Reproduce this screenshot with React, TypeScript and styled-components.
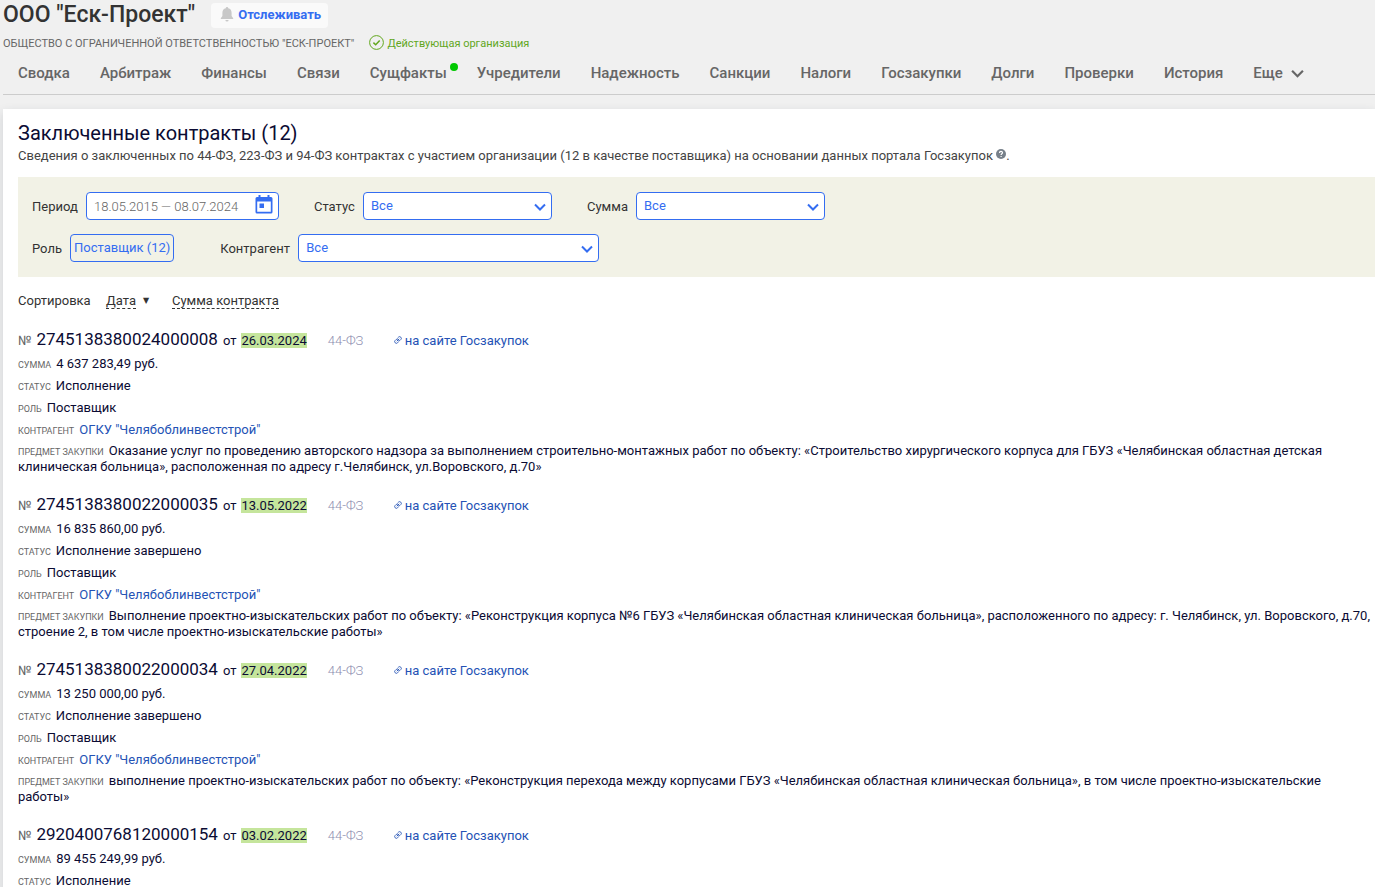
import React from "react";
import styled, { createGlobalStyle } from "styled-components";

const GlobalStyle = createGlobalStyle`
  *, *::before, *::after { box-sizing: border-box; }
  body {
    margin: 0;
    background: #f0f0f0;
    color: #333;
    font-family: Roboto, "Open Sans", sans-serif;
    font-size: 13px;
    line-height: 16px;
  }
  button, input, select { font: inherit; }
  h1, h2, p, dl, dt, dd { margin: 0; }
  a { text-decoration: none; }
`;

const Page = styled.div`
  min-height: 100vh;
  padding-left: 3px;
`;

const TitleRow = styled.header`
  display: flex;
  align-items: center;
  gap: 16px;
  height: 30px;
`;

const Title = styled.h1`
  font-size: 23px;
  line-height: 28px;
  font-weight: 500;
  white-space: nowrap;
`;

const TrackButton = styled.button`
  display: flex;
  align-items: center;
  gap: 4px;
  height: 25px;
  padding: 0 7px 1px 9px;
  border: 0;
  border-radius: 4px;
  background: #fafafa;
  color: #346df1;
  font-weight: 700;
  white-space: nowrap;
`;

const LegalRow = styled.div`
  display: flex;
  align-items: center;
  gap: 15px;
  height: 27px;
  font-size: 11px;
  color: #666;
  white-space: nowrap;
`;

const ActiveState = styled.span`
  display: flex;
  align-items: center;
  gap: 3px;
  color: #62a71d;
  svg { margin-bottom: 2px; }
`;

const Nav = styled.nav`
  display: flex;
  gap: 30px;
  height: 38px;
  padding: 6px 0 0 15px;
  border-bottom: 1px solid #ccc;
  overflow: hidden;
`;

const NavLink = styled.a`
  position: relative;
  display: flex;
  align-items: center;
  gap: 8px;
  height: 20px;
  color: #666;
  font-size: 15px;
  font-weight: 500;
  white-space: nowrap;
`;

const NewDot = styled.span`
  position: absolute;
  top: 0;
  right: -11px;
  width: 8px;
  height: 8px;
  border-radius: 50%;
  background: #00c800;
`;

const Panel = styled.main`
  margin-top: 14px;
  padding: 12px 0 0 15px;
  background: #fff;
  box-shadow: 0 4px 10px rgba(40, 50, 70, 0.16);
`;

const PanelTitle = styled.h2`
  font-size: 20px;
  line-height: 24px;
  font-weight: 400;
  color: #0b0b33;
`;

const Lead = styled.p`
  margin-top: 3px;
  color: #444;
`;

const HelpButton = styled.button`
  display: inline-block;
  width: 10px;
  height: 10px;
  padding: 0;
  border: 0;
  background: none;
  vertical-align: 1px;
  svg { display: block; }
`;

const Filters = styled.form`
  display: flex;
  flex-direction: column;
  gap: 14px;
  margin-top: 13px;
  padding: 15px 14px;
  background: #f2f2e6;
`;

const FilterRow = styled.div`
  display: flex;
  gap: 35px;
`;

const Field = styled.div<{ $trail?: number }>`
  display: flex;
  align-items: center;
  gap: 8px;
  margin-right: ${(p) => p.$trail ?? 0}px;
`;

const FieldLabel = styled.label<{ $width: number }>`
  min-width: ${(p) => p.$width}px;
  padding-top: 2px;
  white-space: nowrap;
`;

const DateBox = styled.div`
  display: flex;
  align-items: center;
  width: 193px;
  height: 28px;
  padding: 0 5px 0 7px;
  border: 1px solid #346df1;
  border-radius: 4px;
  background: #fff;
`;

const DateInput = styled.input`
  flex: 1;
  min-width: 0;
  padding: 2px 0 0;
  border: 0;
  outline: 0;
  background: none;
  color: #666;
  font-weight: 300;
`;

const IconButton = styled.button`
  padding: 0 0 2px;
  border: 0;
  background: none;
  color: #346df1;
  svg { display: block; }
`;

const SelectBox = styled.div<{ $width: number }>`
  display: grid;
  align-items: center;
  width: ${(p) => p.$width}px;
  height: 28px;
  color: #346df1;
  > * { grid-area: 1 / 1; }
  svg {
    z-index: 1;
    justify-self: end;
    margin: 2px 6px 0 0;
    pointer-events: none;
  }
`;

const Select = styled.select`
  width: 100%;
  height: 28px;
  padding: 0 24px 0 7px;
  border: 1px solid #346df1;
  border-radius: 4px;
  background: #fff;
  color: #346df1;
  appearance: none;
`;

const RoleButton = styled.button`
  min-width: 104px;
  height: 28px;
  padding: 0 3px;
  border: 1px solid #346df1;
  border-radius: 4px;
  background: none;
  color: #346df1;
`;

const SortRow = styled.div`
  display: flex;
  align-items: center;
  margin-top: 15px;
  height: 18px;
`;

const SortCaption = styled.span`
  min-width: 88px;
`;

const SortButton = styled.button`
  height: 15px;
  padding: 0;
  border: 0;
  border-bottom: 1px dashed #333;
  background: none;
  color: #333;
  line-height: 14px;
`;

const SortArrow = styled.span`
  width: 36px;
  padding-left: 7px;
  font-family: "DejaVu Sans", sans-serif;
  font-size: 8px;
`;

const Contracts = styled.div`
  display: flex;
  flex-direction: column;
  gap: 18px;
  margin-top: 18px;
  color: #0b0b33;
`;

const ContractHead = styled.div`
  display: flex;
  align-items: baseline;
  gap: 5px;
  height: 25px;
  line-height: 22px;
  white-space: nowrap;
`;

const NumberSign = styled.span`
  color: #666;
`;

const ContractNumber = styled.span`
  font-size: 17px;
`;

const DateMark = styled.mark`
  line-height: 15px;
  background: #c5e59c;
  color: inherit;
`;

const Law = styled.span`
  min-width: 39px;
  margin-left: 16px;
  color: #8c8cae;
  font-weight: 300;
`;

const SiteLink = styled.a`
  display: flex;
  align-items: baseline;
  gap: 3px;
  margin-left: 22px;
  color: #2452b5;
  svg { align-self: center; margin-bottom: 3px; }
`;

const Row = styled.div`
  min-height: 22px;
  line-height: 22px;
`;

const SubjectRow = styled.div`
  padding-top: 2px;
`;

const Term = styled.dt`
  display: inline;
  margin-right: 5px;
  color: #666;
  font-size: 9px;
  line-height: 1;
  text-transform: uppercase;
`;

const Value = styled.dd`
  display: inline;
`;

const PartyLink = styled.a`
  color: #2452b5;
`;

const BellIcon = () => (
  <svg width="14" height="15" viewBox="0 0 14 15" aria-hidden="true">
    <path fill="#c8c8c8" d="M7 0a1.2 1.2 0 0 0-1.2 1.3C3.5 1.800 2.400 3.500 2.400 5.800V9L.8 11.200V12h12.400v-.8L11.600 9V5.800c0-2.300-1.100-4-3.400-4.500A1.200 1.200 0 0 0 7 0zM5.400 13a1.600 1.600 0 0 0 3.200 0z" />
  </svg>
);

const CheckCircle = () => (
  <svg width="15" height="15" viewBox="0 0 15 15" fill="none" stroke="#62a71d" aria-hidden="true">
    <circle cx="7.500" cy="7.500" r="6.900" />
    <path d="M4.400 7.600l2.300 2.200 4-4.200" strokeWidth="1.500" />
  </svg>
);

const CalendarIcon = () => (
  <svg width="18" height="20" viewBox="0 0 18 20" aria-hidden="true">
    <path fill="currentColor" fillRule="evenodd" d="M3.500 0h2v2h7V0h2v2H16a1.500 1.500 0 0 1 1.500 1.500v13.500a1.500 1.500 0 0 1-1.500 1.500H2A1.500 1.500 0 0 1 .5 17V3.500A1.500 1.500 0 0 1 2 2h1.500zM2.200 6.500v10.300h13.600V6.500zM4.500 8.500h4.500v4.500H4.500z" />
  </svg>
);

const Chevron = ({ size = 12 }: { size?: number }) => (
  <svg width={size} height={size} viewBox="0 0 12 12" fill="none" stroke="currentColor" strokeWidth="2" aria-hidden="true">
    <path d="M1 3.500l5 5 5-5" />
  </svg>
);

const HelpIcon = () => (
  <svg width="10" height="10" viewBox="0 0 10 10" aria-hidden="true">
    <circle cx="5" cy="5" r="5" fill="#77808a" />
    <path d="M3.500 3.900c0-2 3-2 3-.2 0 1-1.400 1-1.400 2.200M5.100 7v1.100" fill="none" stroke="#fff" strokeWidth="1.200" />
  </svg>
);

const LinkIcon = () => (
  <svg width="8" height="8" viewBox="0 0 24 24" fill="none" stroke="currentColor" strokeWidth="2.600" strokeLinecap="round" aria-hidden="true">
    <path d="M10 13a5 5 0 0 0 7.540.54l3-3a5 5 0 0 0-7.070-7.070l-1.720 1.710" />
    <path d="M14 11a5 5 0 0 0-7.540-.54l-3 3a5 5 0 0 0 7.070 7.070l1.710-1.710" />
    <path d="M9 15l6-6" />
  </svg>
);

const sections = [
  "Сводка", "Арбитраж", "Финансы", "Связи", "Сущфакты", "Учредители", "Надежность",
  "Санкции", "Налоги", "Госзакупки", "Долги", "Проверки", "История",
];

const contracts = [
  {
    number: "2745138380024000008",
    date: "26.03.2024",
    sum: "4 637 283,49 руб.",
    status: "Исполнение",
    subject:
      "Оказание услуг по проведению авторского надзора за выполнением строительно-монтажных работ по объекту: «Строительство хирургического корпуса для ГБУЗ «Челябинская областная детская клиническая больница», расположенная по адресу г.Челябинск, ул.Воровского, д.70»",
  },
  {
    number: "2745138380022000035",
    date: "13.05.2022",
    sum: "16 835 860,00 руб.",
    status: "Исполнение завершено",
    subject:
      "Выполнение проектно-изыскательских работ по объекту: «Реконструкция корпуса №6 ГБУЗ «Челябинская областная клиническая больница», расположенного по адресу: г. Челябинск, ул. Воровского, д.70, строение 2, в том числе проектно-изыскательские работы»",
  },
  {
    number: "2745138380022000034",
    date: "27.04.2022",
    sum: "13 250 000,00 руб.",
    status: "Исполнение завершено",
    subject:
      "выполнение проектно-изыскательских работ по объекту: «Реконструкция перехода между корпусами ГБУЗ «Челябинская областная клиническая больница», в том числе проектно-изыскательские работы»",
  },
  {
    number: "2920400768120000154",
    date: "03.02.2022",
    sum: "89 455 249,99 руб.",
    status: "Исполнение",
    subject: "",
  },
];

type FilterSelectProps = { id: string; label: string; labelWidth: number; width: number };

const FilterSelect = ({ id, label, labelWidth, width }: FilterSelectProps) => (
  <Field>
    <FieldLabel htmlFor={id} $width={labelWidth}>{label}</FieldLabel>
    <SelectBox $width={width}>
      <Select id={id} defaultValue="all">
        <option value="all">Все</option>
      </Select>
      <Chevron />
    </SelectBox>
  </Field>
);

export default function App() {
  return (
    <>
      <GlobalStyle />
      <Page>
        <TitleRow>
          <Title>ООО "Еск-Проект"</Title>
          <TrackButton type="button"><BellIcon />Отслеживать</TrackButton>
        </TitleRow>
        <LegalRow>
          <span>ОБЩЕСТВО С ОГРАНИЧЕННОЙ ОТВЕТСТВЕННОСТЬЮ "ЕСК-ПРОЕКТ"</span>
          <ActiveState><CheckCircle />Действующая организация</ActiveState>
        </LegalRow>
        <Nav>
          {sections.map((name) => (
            <NavLink key={name} href="#">
              {name}
              {name === "Сущфакты" && <NewDot />}
            </NavLink>
          ))}
          <NavLink href="#">Еще <Chevron size={13} /></NavLink>
        </Nav>
        <Panel>
          <PanelTitle>Заключенные контракты (12)</PanelTitle>
          <Lead>
            Сведения о заключенных по 44-ФЗ, 223-ФЗ и 94-ФЗ контрактах с участием организации (12 в качестве поставщика) на основании данных портала Госзакупок{" "}
            <HelpButton type="button" aria-label="Справка"><HelpIcon /></HelpButton>.
          </Lead>
          <Filters>
            <FilterRow>
              <Field>
                <FieldLabel htmlFor="period" $width={46}>Период</FieldLabel>
                <DateBox>
                  <DateInput id="period" defaultValue="18.05.2015 — 08.07.2024" />
                  <IconButton type="button" aria-label="Календарь"><CalendarIcon /></IconButton>
                </DateBox>
              </Field>
              <FilterSelect id="status" label="Статус" labelWidth={41} width={189} />
              <FilterSelect id="sum" label="Сумма" labelWidth={41} width={189} />
            </FilterRow>
            <FilterRow>
              <Field $trail={11}>
                <FieldLabel htmlFor="role" $width={29}>Роль</FieldLabel>
                <RoleButton id="role" type="button">Поставщик (12)</RoleButton>
              </Field>
              <FilterSelect id="party" label="Контрагент" labelWidth={70} width={301} />
            </FilterRow>
          </Filters>
          <SortRow>
            <SortCaption>Сортировка</SortCaption>
            <SortButton type="button">Дата</SortButton>
            <SortArrow>▼</SortArrow>
            <SortButton type="button">Сумма контракта</SortButton>
          </SortRow>
          <Contracts>
            {contracts.map((c) => (
              <article key={c.number}>
                <ContractHead>
                  <NumberSign>№</NumberSign>
                  <ContractNumber>{c.number}</ContractNumber>
                  <span>от</span>
                  <DateMark>{c.date}</DateMark>
                  <Law>44-ФЗ</Law>
                  <SiteLink href="#"><LinkIcon />на сайте Госзакупок</SiteLink>
                </ContractHead>
                <dl>
                  <Row><Term>Сумма</Term><Value>{c.sum}</Value></Row>
                  <Row><Term>Статус</Term><Value>{c.status}</Value></Row>
                  {c.subject && (
                    <>
                      <Row><Term>Роль</Term><Value>Поставщик</Value></Row>
                      <Row>
                        <Term>Контрагент</Term>
                        <Value><PartyLink href="#">ОГКУ "Челябоблинвестстрой"</PartyLink></Value>
                      </Row>
                      <SubjectRow><Term>Предмет закупки</Term><Value>{c.subject}</Value></SubjectRow>
                    </>
                  )}
                </dl>
              </article>
            ))}
          </Contracts>
        </Panel>
      </Page>
    </>
  );
}
